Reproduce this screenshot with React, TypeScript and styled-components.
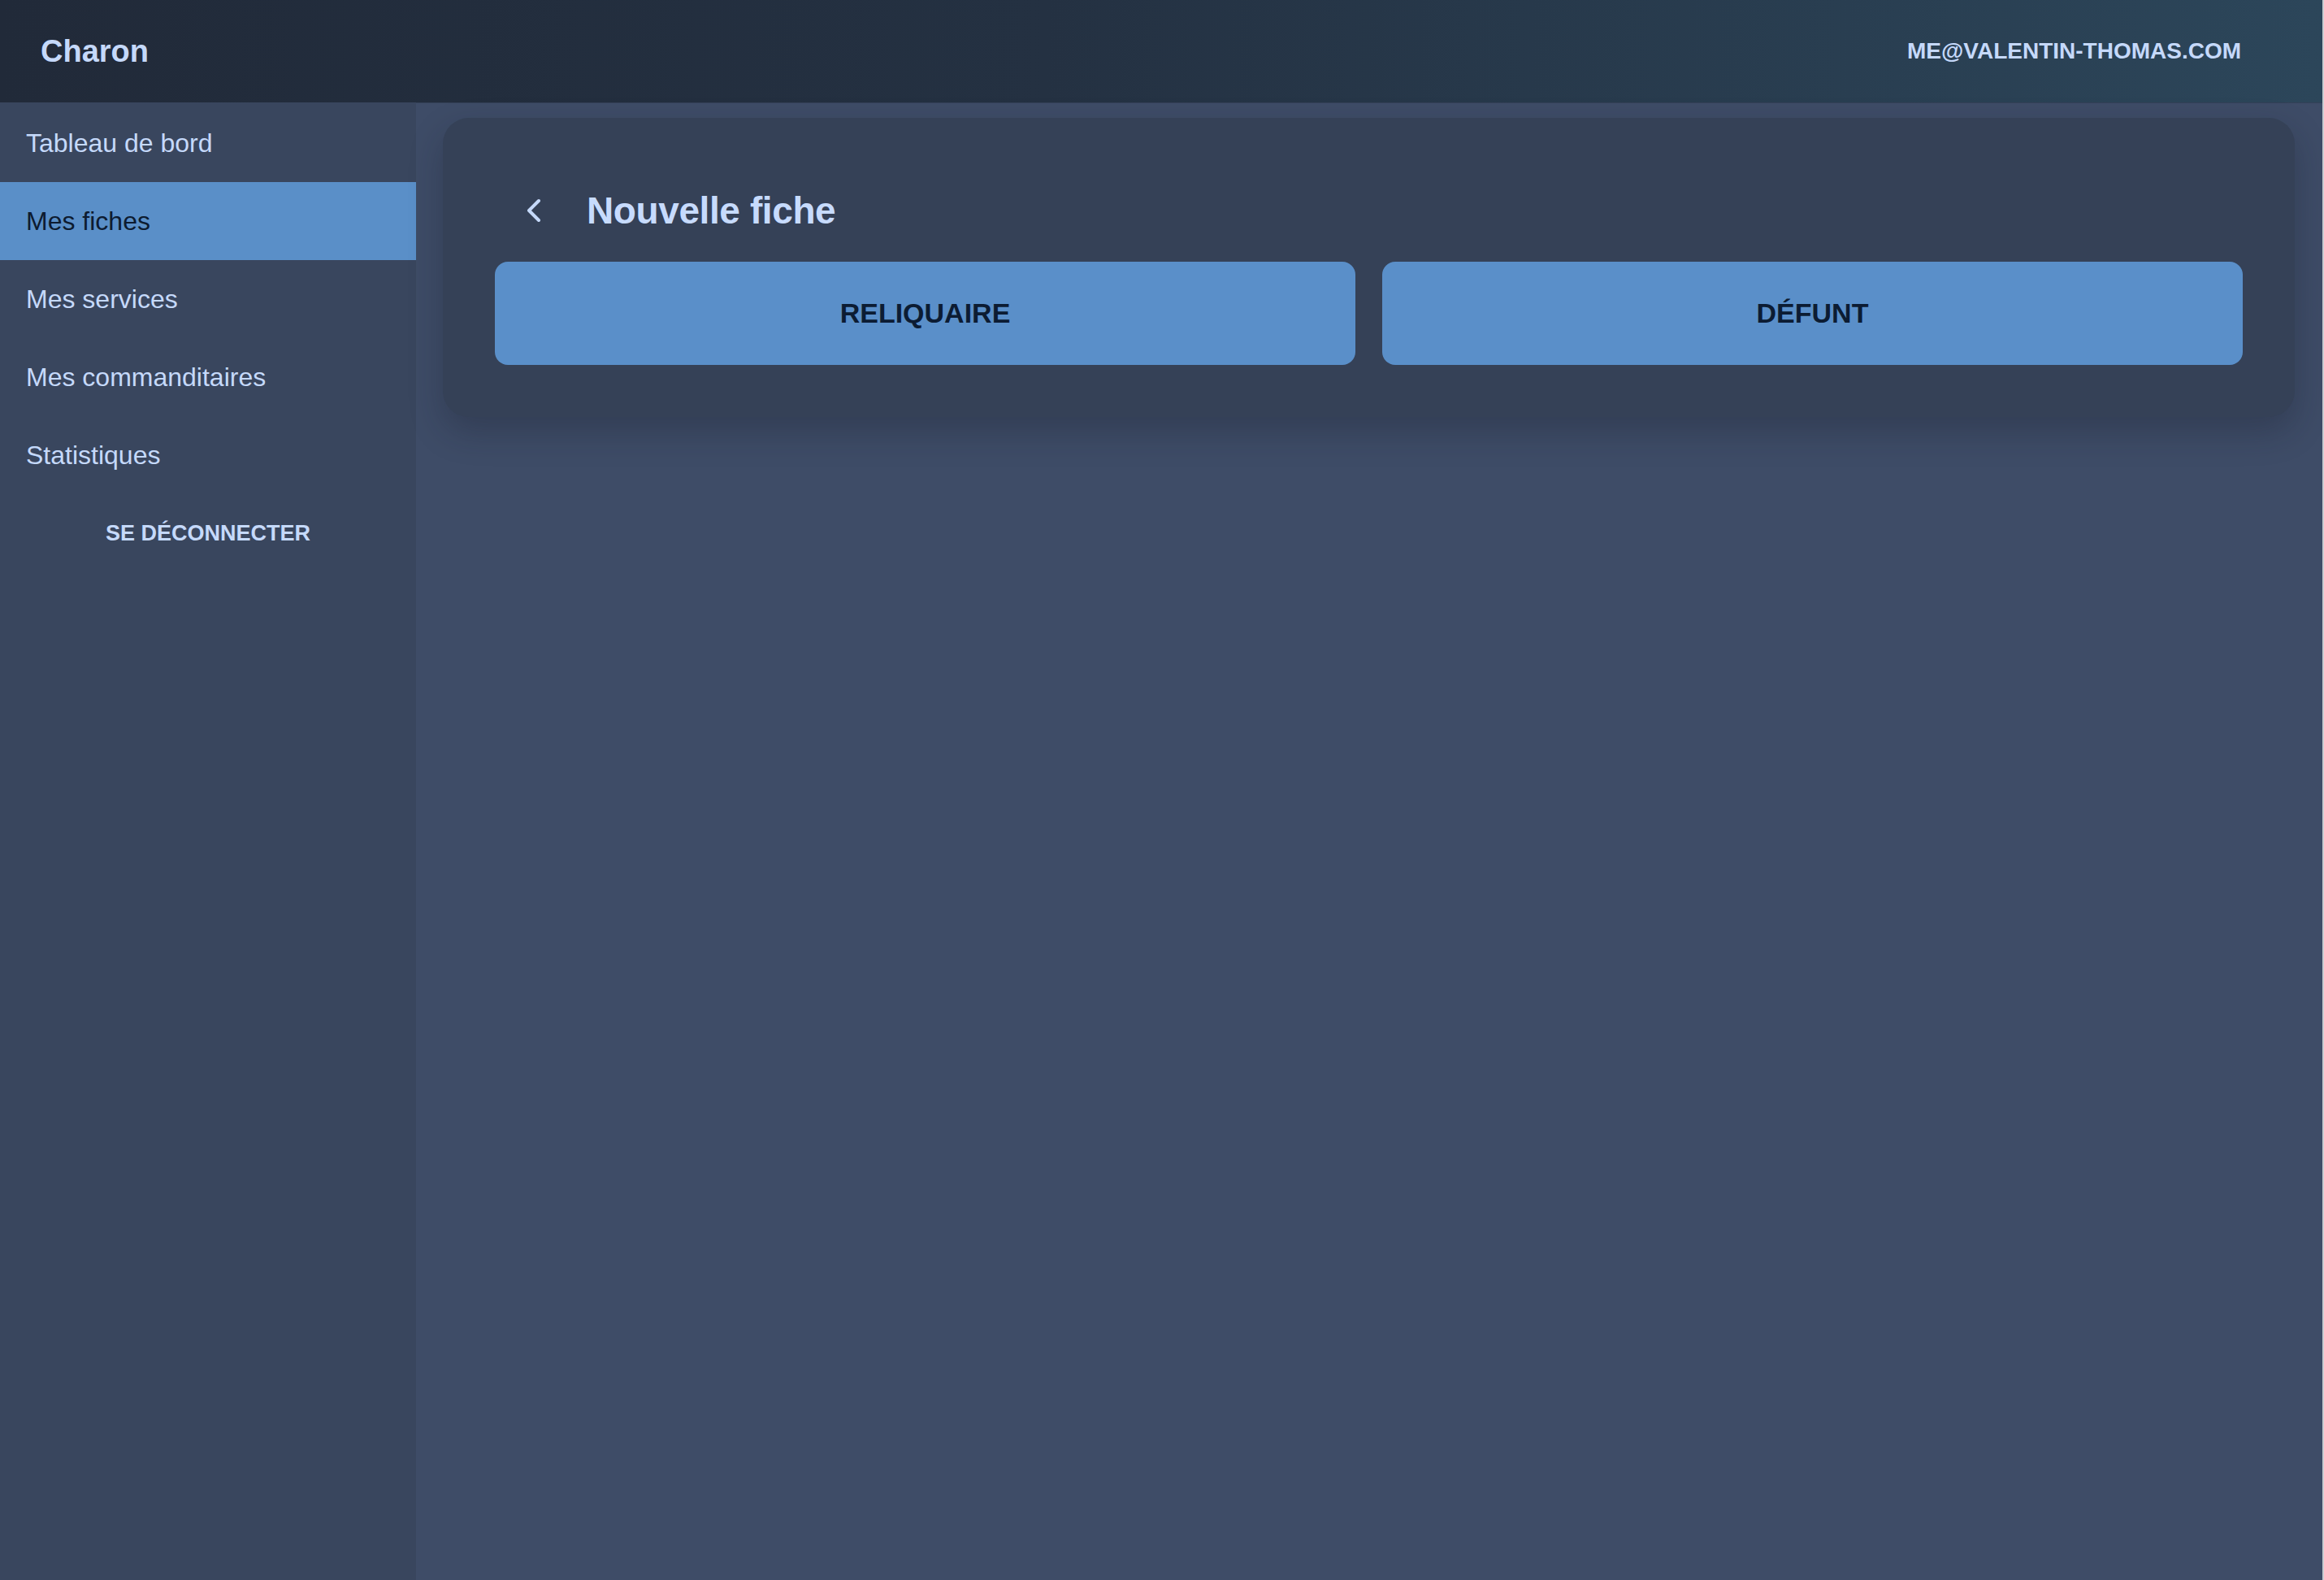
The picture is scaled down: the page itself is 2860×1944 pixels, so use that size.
import styled, { createGlobalStyle } from "styled-components";
import { ChevronLeft } from "lucide-react";

const GlobalStyle = createGlobalStyle`
  html, body {
    margin: 0;
    padding: 0;
    background: #3e4c67;
  }
  body {
    font-family: "Liberation Sans", Arial, sans-serif;
    border-right: 2px solid #c9ccd2;
    min-height: 1944px;
    box-sizing: border-box;
  }
`;

const Page = styled.div`
  display: flex;
  flex-direction: column;
  min-height: 1944px;
`;

const Header = styled.header`
  height: 126px;
  display: flex;
  align-items: center;
  justify-content: space-between;
  padding: 0 100px 0 50px;
  background: linear-gradient(90deg, #212a39 0%, #243142 45%, #2c465a 100%);
  box-shadow: 0 1px 0 rgba(0, 0, 0, 0.15);
`;

const Brand = styled.div`
  font-size: 38px;
  font-weight: 700;
  color: #c5d9fa;
`;

const Account = styled.div`
  font-size: 28px;
  font-weight: 700;
  color: #c5d9fa;
  text-transform: uppercase;
`;

const Body = styled.div`
  flex: 1;
  display: flex;
`;

const Sidebar = styled.nav`
  width: 512px;
  flex-shrink: 0;
  background: #39465e;
  padding-top: 2px;
`;

const NavItem = styled.div<{ $active?: boolean }>`
  height: 96px;
  display: flex;
  align-items: center;
  padding-left: 32px;
  font-size: 32px;
  color: ${(p) => (p.$active ? "#0d1b30" : "#c5d9fa")};
  background: ${(p) => (p.$active ? "#5a8fc8" : "transparent")};
`;

const Logout = styled.div`
  height: 96px;
  display: flex;
  align-items: center;
  justify-content: center;
  font-size: 27px;
  font-weight: 700;
  color: #c5d9fa;
  text-transform: uppercase;
`;

const Main = styled.main`
  flex: 1;
  padding: 19px 34px 0 33px;
`;

const Card = styled.section`
  background: #354157;
  border-radius: 32px;
  padding: 64px;
  box-shadow: 0 18px 40px rgba(20, 26, 40, 0.28);
`;

const TitleRow = styled.div`
  height: 100px;
  display: flex;
  align-items: center;
  margin-bottom: 13px;
`;

const BackButton = styled.div`
  width: 96px;
  height: 96px;
  display: flex;
  align-items: center;
  justify-content: center;
  color: #c5d9fa;
  margin-right: 17px;
`;

const Title = styled.h1`
  margin: 0;
  font-size: 46px;
  font-weight: 700;
  letter-spacing: -0.4px;
  color: #c7dbfd;
`;

const Choices = styled.div`
  display: grid;
  grid-template-columns: 1fr 1fr;
  gap: 33px;
`;

const Choice = styled.button`
  height: 127px;
  border: none;
  border-radius: 16px;
  background: #5a8fc9;
  color: #0c1c33;
  font-family: "Liberation Sans", Arial, sans-serif;
  font-size: 34px;
  font-weight: 700;
  text-transform: uppercase;
  cursor: pointer;
`;

const links = [
  "Tableau de bord",
  "Mes fiches",
  "Mes services",
  "Mes commanditaires",
  "Statistiques",
];

export default function App() {
  return (
    <>
      <GlobalStyle />
      <Page>
        <Header>
          <Brand>Charon</Brand>
          <Account>me@valentin-thomas.com</Account>
        </Header>
        <Body>
          <Sidebar>
            {links.map((l) => (
              <NavItem key={l} $active={l === "Mes fiches"}>
                {l}
              </NavItem>
            ))}
            <Logout>Se déconnecter</Logout>
          </Sidebar>
          <Main>
            <Card>
              <TitleRow>
                <BackButton>
                  <ChevronLeft size={48} strokeWidth={2} />
                </BackButton>
                <Title>Nouvelle fiche</Title>
              </TitleRow>
              <Choices>
                <Choice>Reliquaire</Choice>
                <Choice>Défunt</Choice>
              </Choices>
            </Card>
          </Main>
        </Body>
      </Page>
    </>
  );
}
